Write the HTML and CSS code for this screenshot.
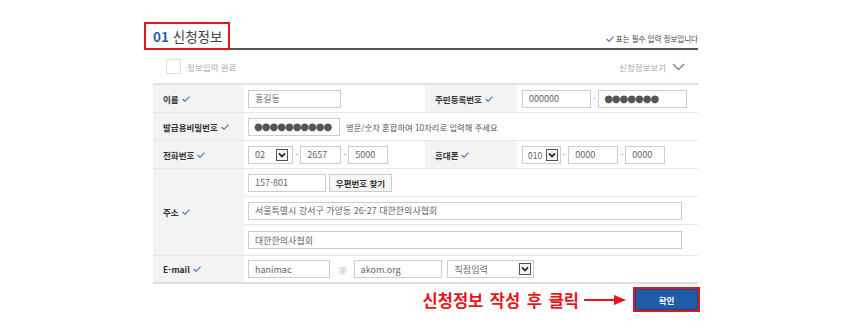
FILE: index.html
```html
<!DOCTYPE html>
<html lang="ko">
<head>
    <meta charset="UTF-8">
    <title>신청정보</title>
    <link rel="stylesheet" href="styles.css">
</head>
<body>

<div class="wrap">
    <div class="title-bar">
        <h2 class="title"><span class="num">01</span> 신청정보</h2>
        <p class="note"><svg class="chk" width="8" height="6" viewBox="0 0 8 6"><polyline points="0.6,3 3,5.3 7.5,0.6"/></svg>표는 필수 입력 정보입니다</p>
    </div>

    <div class="form-box">
        <div class="sub-bar">
            <label class="done"><span class="box"></span>정보입력 완료</label>
            <span class="toggle">신청정보보기 <svg width="13" height="8" viewBox="0 0 13 8"><polyline points="1,1 6.5,6.5 12,1"/></svg></span>
        </div>

        <div class="form-grid">
            <!-- 이름 / 주민등록번호 -->
            <div class="th">이름 <svg class="chk" width="8" height="6" viewBox="0 0 8 6"><polyline points="0.6,3 3,5.3 7.5,0.6"/></svg></div>
            <div class="td">
                <input class="inp w-name" type="text" value="홍길동">
            </div>
            <div class="th">주민등록번호 <svg class="chk" width="8" height="6" viewBox="0 0 8 6"><polyline points="0.6,3 3,5.3 7.5,0.6"/></svg></div>
            <div class="td c2">
                <input class="inp w-jumin1" type="text" value="000000">
                <span class="dash">-</span>
                <input class="inp dots w-jumin2" type="text" value="●●●●●●●">
            </div>

            <!-- 발급용비밀번호 -->
            <div class="th">발급용비밀번호 <svg class="chk" width="8" height="6" viewBox="0 0 8 6"><polyline points="0.6,3 3,5.3 7.5,0.6"/></svg></div>
            <div class="td wide">
                <input class="inp dots w-pw" type="text" value="●●●●●●●●●●">
                <span class="hint">영문/숫자 혼합하여 10자리로 입력해 주세요</span>
            </div>

            <!-- 전화번호 / 휴대폰 -->
            <div class="th">전화번호 <svg class="chk" width="8" height="6" viewBox="0 0 8 6"><polyline points="0.6,3 3,5.3 7.5,0.6"/></svg></div>
            <div class="td">
                <div class="sel w-tel"><span>02</span><svg class="sel-arrow" width="12" height="12" viewBox="0 0 12 12"><rect x="0.5" y="0.5" width="11" height="11"/><polyline points="3,4.3 6,7.5 9,4.3"/></svg></div>
                <span class="dash">-</span>
                <input class="inp w-tel2" type="text" value="2657">
                <span class="dash">-</span>
                <input class="inp w-tel3" type="text" value="5000">
            </div>
            <div class="th">휴대폰 <svg class="chk" width="8" height="6" viewBox="0 0 8 6"><polyline points="0.6,3 3,5.3 7.5,0.6"/></svg></div>
            <div class="td c2">
                <div class="sel w-hp"><span>010</span><svg class="sel-arrow" width="12" height="12" viewBox="0 0 12 12"><rect x="0.5" y="0.5" width="11" height="11"/><polyline points="3,4.3 6,7.5 9,4.3"/></svg></div>
                <span class="dash">-</span>
                <input class="inp w-hp2" type="text" value="0000">
                <span class="dash">-</span>
                <input class="inp w-hp3" type="text" value="0000">
            </div>

            <!-- 주소 -->
            <div class="th">주소 <svg class="chk" width="8" height="6" viewBox="0 0 8 6"><polyline points="0.6,3 3,5.3 7.5,0.6"/></svg></div>
            <div class="td wide addr">
                <div class="line">
                    <input class="inp w-zip" type="text" value="157-801">
                    <button class="zip-btn">우편번호 찾기</button>
                </div>
                <div class="line">
                    <input class="inp w-addr" type="text" value="서울특별시 강서구 가양동 26-27 대한한의사협회">
                </div>
                <div class="line">
                    <input class="inp w-addr" type="text" value="대한한의사협회">
                </div>
            </div>

            <!-- E-mail -->
            <div class="th last">E-mail <svg class="chk" width="8" height="6" viewBox="0 0 8 6"><polyline points="0.6,3 3,5.3 7.5,0.6"/></svg></div>
            <div class="td wide last">
                <input class="inp w-mail1" type="text" value="hanimac">
                <span class="at">@</span>
                <input class="inp w-mail2" type="text" value="akom.org">
                <div class="sel w-mailsel"><span>직접입력</span><svg class="sel-arrow" width="12" height="12" viewBox="0 0 12 12"><rect x="0.5" y="0.5" width="11" height="11"/><polyline points="3,4.3 6,7.5 9,4.3"/></svg></div>
            </div>
        </div>
    </div>

    <div class="actions">
        <span class="guide">신청정보 작성 후 클릭</span>
        <svg class="arrow" width="42" height="12" viewBox="0 0 42 12"><line x1="0" y1="6" x2="32" y2="6"/><polygon points="30,1 42,6 30,11"/></svg>
        <button class="ok-btn">확인</button>
    </div>
</div>

</body>
</html>
```

FILE: styles.css
```css
/* 신청정보 입력 폼 */
body {
    margin: 0;
    background-color: #fff;
    font-family: "Noto Sans CJK KR", "Noto Sans", sans-serif;
    color: #333;
}

.wrap {
    width: 554px;
    margin-left: 144px;
    padding-top: 22px;
}

.title-bar {
    display: flex;
    justify-content: space-between;
    align-items: flex-end;
    border-bottom: 2px solid #555;
}

.title {
    position: relative;
    margin: 0 0 -2px;
    padding: 0 6px 0 7px;
    border: 2px solid #e8141b;
    background-color: #fff;
    font-size: 13.5px;
    line-height: 24px;
    font-weight: normal;
    color: #444;
}

.title .num {
    color: #2b5fab;
    font-weight: bold;
}

.note {
    display: flex;
    align-items: center;
    gap: 2px;
    margin: 0 0 4px;
    font-size: 7.5px;
    line-height: 10px;
    color: #444;
}

.chk polyline {
    fill: none;
    stroke: #4d79c7;
    stroke-width: 1.2;
}

.form-box {
    margin-left: 9px;
}

.sub-bar {
    display: flex;
    justify-content: space-between;
    align-items: center;
    height: 33px;
    padding: 0 13px;
    border-bottom: 2px solid #e2e2e2;
    font-size: 8.5px;
    color: #aaa;
}

.done {
    display: flex;
    align-items: center;
    gap: 6px;
}

.done .box {
    width: 15px;
    height: 15px;
    border: 1px solid #ddd;
    box-sizing: border-box;
}

.toggle {
    display: flex;
    align-items: center;
    gap: 6px;
}

.toggle polyline {
    fill: none;
    stroke: #7a8594;
    stroke-width: 1.4;
}

.form-grid {
    display: grid;
    grid-template-columns: 91px 181px 92px 181px;
    border-bottom: 2px solid #dedede;
}

.th, .td {
    display: flex;
    align-items: center;
    min-height: 27px;
    border-bottom: 1px solid #e6e6e6;
    font-size: 9px;
}

.th {
    gap: 3px;
    padding-left: 10px;
    background-color: #f3f3f3;
    font-size: 8.5px;
    font-weight: bold;
    color: #333;
}

.td {
    padding-left: 4px;
}

.td.c2 {
    padding-left: 5px;
}

.td.wide {
    grid-column: span 3;
}

.th.last, .td.last {
    min-height: 26px;
    border-bottom: none;
}

.td.addr {
    display: block;
    padding-left: 0;
}

.addr .line {
    display: flex;
    align-items: center;
    gap: 3px;
    height: 27px;
    padding-left: 4px;
    border-bottom: 1px solid #e6e6e6;
}

.addr .line:last-child {
    height: 30px;
    border-bottom: none;
}

.inp {
    height: 18px;
    box-sizing: border-box;
    padding: 0 6px;
    border: 1px solid #ccc;
    font-family: inherit;
    font-size: 9px;
    color: #666;
    outline: none;
}

.inp.dots {
    padding: 0 5px;
    font-family: "DejaVu Sans", sans-serif;
    font-size: 10px;
    letter-spacing: -1px;
    color: #555;
}

.w-name { width: 93px; }
.w-jumin1 { width: 69px; }
.w-jumin2 { width: 89px; }
.w-pw { width: 92px; }
.w-tel2 { width: 41px; }
.w-tel3 { width: 40px; }
.w-hp2 { width: 50px; }
.w-hp3 { width: 40px; }
.w-zip { width: 78px; }
.w-addr { width: 434px; }
.w-mail1 { width: 82px; }
.w-mail2 { width: 88px; }

.dash {
    margin: 0 2px;
    color: #999;
}

.at {
    margin: 0 7px 0 9px;
    color: #aaa;
    font-size: 8px;
}

.hint {
    margin-left: 6px;
    font-size: 8.3px;
    color: #555;
}

.sel {
    display: flex;
    justify-content: space-between;
    align-items: center;
    height: 18px;
    box-sizing: border-box;
    border: 1px solid #ccc;
    font-size: 9px;
    color: #666;
}

.sel-arrow rect {
    fill: #f4f4f4;
    stroke: #555;
}

.sel-arrow polyline {
    fill: none;
    stroke: #222;
    stroke-width: 1.7;
}

.w-tel { width: 45px; padding: 0 4px 0 6px; }
.w-hp { width: 39px; padding: 0 2px 0 5px; font-size: 8.5px; }
.w-mailsel { width: 87px; margin-left: 5px; padding: 0 2px 0 7px; }

.zip-btn {
    width: 63px;
    height: 18px;
    padding: 0;
    border: 1px solid #ccc;
    background-color: #f6f6f6;
    font-family: inherit;
    font-size: 8.5px;
    font-weight: bold;
    color: #333;
}

.actions {
    display: flex;
    justify-content: flex-end;
    align-items: center;
    margin: 3px -2px 0 0;
}

.guide {
    font-size: 16.5px;
    font-weight: bold;
    color: #e8141b;
    word-spacing: 2px;
}

.arrow {
    margin: 0 7px 0 5px;
}

.arrow line {
    stroke: #e8141b;
    stroke-width: 2;
}

.arrow polygon {
    fill: #e8141b;
}

.ok-btn {
    width: 67px;
    height: 25px;
    padding: 0;
    border: 2px solid #e8141b;
    background-color: #1e5da8;
    box-shadow: inset 0 0 0 1px #17498a;
    font-family: inherit;
    font-size: 8.5px;
    font-weight: bold;
    color: #fff;
}
```
